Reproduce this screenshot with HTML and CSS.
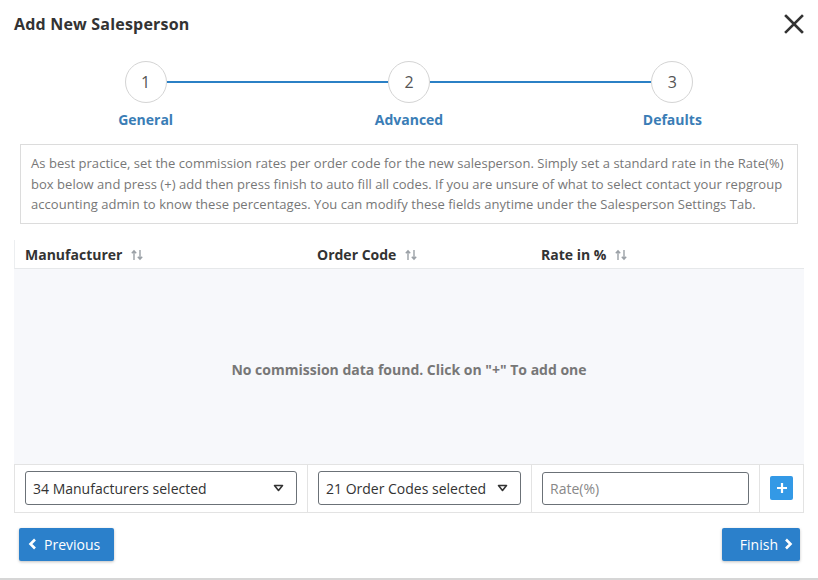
FILE: index.html
```html
<!DOCTYPE html>
<html lang="en">
<head>
	<meta charset="UTF-8">
	<title>Add New Salesperson</title>
	<link rel="stylesheet" href="styles.css">
</head>
<body>
	<div class="modal">
		<header class="modal-header">
			<h1>Add New Salesperson</h1>
			<button class="close" aria-label="Close">
				<svg width="20" height="20" viewBox="0 0 20 20"><path d="M2 2 L18 18 M18 2 L2 18" stroke="#333" stroke-width="2.6" stroke-linecap="square"/></svg>
			</button>
		</header>

		<ol class="stepper">
			<li class="step"><span class="circle">1</span><span class="label">General</span></li>
			<li class="step"><span class="circle">2</span><span class="label">Advanced</span></li>
			<li class="step"><span class="circle">3</span><span class="label">Defaults</span></li>
		</ol>

		<p class="notice">As best practice, set the commission rates per order code for the new salesperson. Simply set a standard rate in the Rate(%) box below and press (+) add then press finish to auto fill all codes. If you are unsure of what to select contact your repgroup accounting admin to know these percentages. You can modify these fields anytime under the Salesperson Settings Tab.</p>

		<section class="grid">
			<div class="row head">
				<div class="cell">Manufacturer <svg class="sort" width="12" height="12" viewBox="0 0 12 12"><path d="M3 11 V2 M0.8 4.2 L3 1.8 L5.2 4.2 M9 1 V10 M6.8 7.8 L9 10.2 L11.2 7.8" stroke="#9aa0a6" stroke-width="1.4" fill="none"/></svg></div>
				<div class="cell">Order Code <svg class="sort" width="12" height="12" viewBox="0 0 12 12"><path d="M3 11 V2 M0.8 4.2 L3 1.8 L5.2 4.2 M9 1 V10 M6.8 7.8 L9 10.2 L11.2 7.8" stroke="#9aa0a6" stroke-width="1.4" fill="none"/></svg></div>
				<div class="cell">Rate in % <svg class="sort" width="12" height="12" viewBox="0 0 12 12"><path d="M3 11 V2 M0.8 4.2 L3 1.8 L5.2 4.2 M9 1 V10 M6.8 7.8 L9 10.2 L11.2 7.8" stroke="#9aa0a6" stroke-width="1.4" fill="none"/></svg></div>
				<div class="cell"></div>
			</div>
			<div class="empty">No commission data found. Click on "+" To add one</div>
			<div class="row inputs">
				<div class="cell">
					<div class="select"><span>34 Manufacturers selected</span><svg width="11" height="8" viewBox="0 0 11 8"><path d="M1.5 1.5 H9.5 L5.5 6.5 Z" stroke="#333" stroke-width="1.6" fill="none" stroke-linejoin="round"/></svg></div>
				</div>
				<div class="cell">
					<div class="select"><span>21 Order Codes selected</span><svg width="11" height="8" viewBox="0 0 11 8"><path d="M1.5 1.5 H9.5 L5.5 6.5 Z" stroke="#333" stroke-width="1.6" fill="none" stroke-linejoin="round"/></svg></div>
				</div>
				<div class="cell">
					<input type="text" class="rate" placeholder="Rate(%)">
				</div>
				<div class="cell">
					<button class="add" aria-label="Add"><svg width="12" height="12" viewBox="0 0 12 12"><path d="M6 1 V11 M1 6 H11" stroke="#fff" stroke-width="2.2"/></svg></button>
				</div>
			</div>
		</section>

		<footer class="actions">
			<button class="btn"><svg width="9" height="12" viewBox="0 0 9 12"><path d="M7 1.5 L2.5 6 L7 10.5" stroke="#fff" stroke-width="2.6" fill="none"/></svg>Previous</button>
			<button class="btn">Finish<svg width="9" height="12" viewBox="0 0 9 12"><path d="M2 1.5 L6.5 6 L2 10.5" stroke="#fff" stroke-width="2.6" fill="none"/></svg></button>
		</footer>
	</div>
</body>
</html>
```

FILE: styles.css
```css
* { box-sizing: border-box; }
body {
	margin: 0;
	background: #fff;
	font-family: "Open Sans", "Liberation Sans", sans-serif;
	color: #333;
}
.modal {
	width: 818px;
	height: 580px;
	border-bottom: 2px solid #d6d6d6;
	padding: 0 14px;
}

/* header */
.modal-header {
	display: flex;
	align-items: center;
	justify-content: space-between;
	height: 47px;
	padding-top: 1px;
}
.modal-header h1 {
	margin: 0;
	font-size: 16px;
	letter-spacing: .2px;
	font-weight: 700;
	color: #333;
}
.close {
	border: none;
	background: none;
	padding: 0;
	display: flex;
	cursor: pointer;
}

/* stepper */
.stepper {
	list-style: none;
	margin: 0;
	padding: 14px 0 0;
	display: grid;
	grid-template-columns: repeat(3, 1fr);
}
.step {
	position: relative;
	display: flex;
	flex-direction: column;
	align-items: center;
}
.step:not(:last-child)::after {
	content: "";
	position: absolute;
	top: 20px;
	left: calc(50% + 21px);
	width: calc(100% - 42px);
	height: 2px;
	background: #2b80c5;
}
.circle {
	width: 42px;
	height: 42px;
	border: 1px solid #d4d4d4;
	border-radius: 50%;
	display: flex;
	align-items: center;
	justify-content: center;
	font-size: 16px;
	color: #555;
	background: #fff;
}
.label {
	margin-top: 7px;
	font-size: 14px;
	font-weight: 700;
	color: #3a7db6;
}

/* notice */
.notice {
	margin: 15px 6px 0;
	padding: 8px 10px;
	border: 1px solid #dcdcdc;
	font-size: 13px;
	letter-spacing: .035px;
	line-height: 20.5px;
	color: #777;
}

/* grid */
.grid {
	margin-top: 16px;
}
.row {
	display: grid;
	grid-template-columns: 292px 224px 228px 1fr;
}
.row.head {
	height: 29px;
	padding-top: 2px;
	border-left: 1px solid #eceef0;
	border-bottom: 1px solid #e6e8ea;
}
.row.head .cell {
	display: flex;
	align-items: center;
	gap: 9px;
	padding-left: 10px;
	font-size: 14px;
	font-weight: 700;
	color: #333;
}
.empty {
	height: 195px;
	background: #f7f8fb;
	display: flex;
	align-items: center;
	justify-content: center;
	font-size: 14px;
	font-weight: 700;
	color: #777;
	padding-top: 6px;
}
.row.inputs {
	height: 49px;
	border: 1px solid #e3e3e3;
}
.row.inputs .cell {
	display: flex;
	align-items: center;
	padding: 0 10px;
	border-left: 1px solid #e3e3e3;
}
.row.inputs .cell:first-child { border-left: none; }
.select {
	width: 100%;
	height: 34px;
	border: 1px solid #6b7177;
	border-radius: 3px;
	display: flex;
	align-items: center;
	justify-content: space-between;
	padding: 0 12px 0 7px;
	font-size: 14px;
	color: #333;
}
.rate {
	width: 100%;
	height: 33px;
	border: 1px solid #6b7177;
	border-radius: 3px;
	padding: 0 7px;
	font: 14px "Open Sans", "Liberation Sans", sans-serif;
	color: #333;
}
.rate::placeholder { color: #888; }
.row.inputs .cell:last-child {
	justify-content: center;
	padding: 0;
}
.add {
	width: 23px;
	height: 24px;
	border: none;
	border-radius: 2px;
	background: #3399e6;
	display: flex;
	align-items: center;
	justify-content: center;
	padding: 0;
	cursor: pointer;
}

/* footer */
.actions {
	display: flex;
	justify-content: space-between;
	padding: 15px 4px 0 5px;
}
.btn {
	height: 33px;
	border: none;
	border-radius: 2px;
	background: #2b80cb;
	color: #fff;
	font: 14px "Open Sans", "Liberation Sans", sans-serif;
	display: flex;
	align-items: center;
	gap: 7px;
	padding: 0 9px;
	box-shadow: 0 1px 3px rgba(0,0,0,.25);
	cursor: pointer;
}
.btn:first-child { padding-right: 14px; }
.btn:last-child { padding-left: 18px; padding-right: 7px; gap: 6px; }
```
